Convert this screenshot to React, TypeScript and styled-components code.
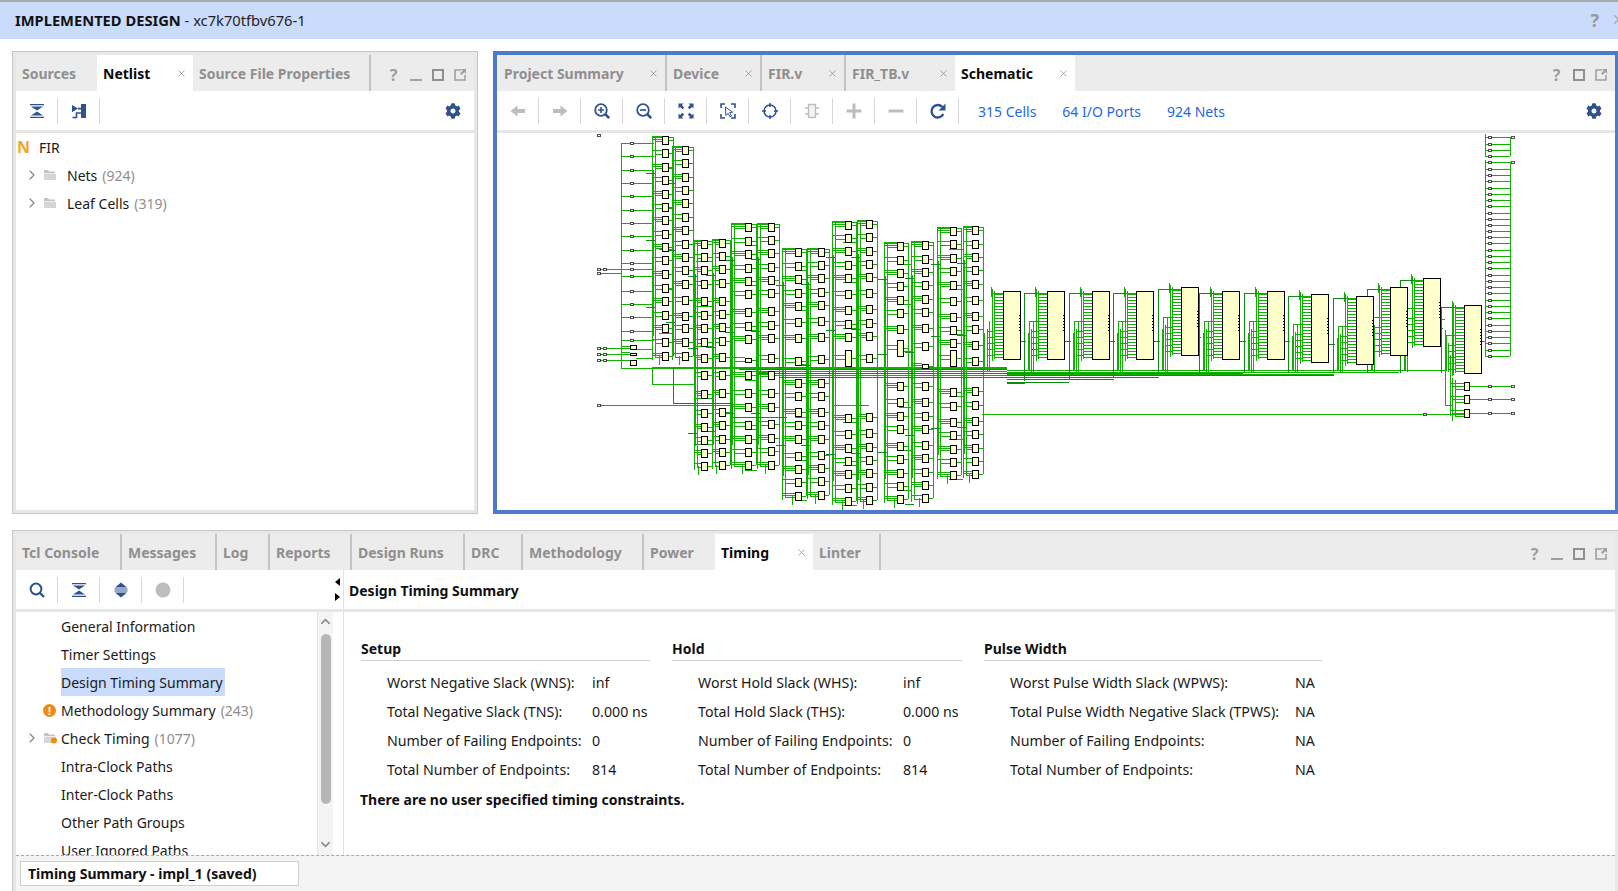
import styled, { createGlobalStyle } from 'styled-components'
import { ReactNode } from 'react'
import { FaCog } from 'react-icons/fa'
import { ChevronRight, ChevronUp, ChevronDown, X } from 'lucide-react'

const NAVY = '#2f5190'
const OFF = '#bdbdbd'

const GlobalStyle = createGlobalStyle`
  html, body {
    margin: 0;
    padding: 0;
    width: 1618px;
    height: 891px;
    overflow: hidden;
    background: #fff;
    font-family: "Noto Sans", "Open Sans", sans-serif;
    font-size: 14px;
    color: #1a1a1a;
  }
  * { box-sizing: border-box; }
`

/* ---------- schematic data, page coordinates ---------- */

type Column = { x: number; bus: number; ys: number[]; tall?: number[]; flat?: number[] }

const COLUMNS: Column[] = [
  { x: 666, bus: 13, ys: [140, 153, 167, 180, 194, 207, 220, 234, 247, 260, 274, 288, 301, 315, 328, 342, 356] },
  { x: 686, bus: 13, ys: [150, 163, 177, 190, 203, 217, 230, 244, 257, 270, 284, 300, 316, 328, 342, 356] },
  { x: 705, bus: 10, ys: [244, 257, 270, 284, 301, 315, 328, 342, 358, 375, 394, 413, 427, 440, 453, 466] },
  { x: 723, bus: 10, ys: [243, 256, 269, 283, 301, 314, 327, 341, 357, 375, 393, 412, 425, 439, 452, 465] },
  { x: 749, bus: 17, ys: [227, 241, 254, 268, 281, 294, 312, 326, 339, 360, 375, 393, 407, 425, 439, 452, 465], flat: [360] },
  { x: 772, bus: 14, ys: [227, 240, 253, 267, 280, 293, 311, 325, 338, 358, 375, 393, 407, 424, 438, 451, 465] },
  { x: 799, bus: 16, ys: [252, 266, 279, 293, 306, 322, 338, 361, 383, 396, 412, 425, 439, 456, 469, 482, 496] },
  { x: 822, bus: 14, ys: [252, 265, 278, 292, 305, 321, 337, 359, 383, 396, 412, 425, 439, 455, 468, 481, 495] },
  { x: 849, bus: 16, ys: [225, 238, 251, 265, 278, 294, 310, 324, 337, 358, 418, 434, 448, 461, 474, 488, 501], tall: [358] },
  { x: 870, bus: 12, ys: [224, 237, 251, 264, 277, 293, 309, 323, 336, 358, 417, 433, 447, 460, 473, 487, 500] },
  { x: 901, bus: 16, ys: [246, 260, 273, 286, 300, 313, 329, 348, 386, 402, 416, 429, 446, 459, 473, 486, 499], tall: [348] },
  { x: 926, bus: 14, ys: [245, 259, 272, 285, 299, 312, 328, 346, 366, 386, 402, 416, 429, 445, 458, 472, 485, 498], flat: [366] },
  { x: 954, bus: 16, ys: [231, 244, 258, 271, 285, 301, 317, 330, 343, 358, 392, 406, 422, 435, 449, 462, 475], tall: [358] },
  { x: 976, bus: 12, ys: [230, 244, 257, 270, 284, 300, 316, 329, 345, 361, 391, 405, 421, 434, 448, 461, 474] },
]

const BLOCKS = [
  { x: 1004, y: 291 },
  { x: 1048, y: 291 },
  { x: 1093, y: 291 },
  { x: 1137, y: 291 },
  { x: 1182, y: 287 },
  { x: 1223, y: 291 },
  { x: 1268, y: 291 },
  { x: 1312, y: 294 },
  { x: 1357, y: 296 },
  { x: 1391, y: 287 },
  { x: 1424, y: 278 },
  { x: 1465, y: 305 },
]

const LEFT_PORT_Y = [143, 156, 170, 183, 196, 210, 223, 236, 250, 263, 269, 276, 291, 304, 317, 331, 340]
const RIGHT_PORT_Y = [137, 144, 150, 156, 162, 169, 175, 181, 188, 194, 200, 206, 213, 219, 225, 231, 237, 243, 250, 256, 262, 268, 275, 281, 287, 293, 300, 306, 312, 318, 325, 331, 337, 343, 350, 356]
const OUT_CELLS = [386, 399, 413]

function buildWires() {
  const bright: string[] = []
  const dark: string[] = []
  const h = (list: string[], x1: number, x2: number, y: number) => list.push(`M${x1} ${y}H${x2}`)
  const v = (list: string[], x: number, y1: number, y2: number) => list.push(`M${x} ${y1}V${y2}`)

  // inputs on the left
  v(bright, 622, 143, 368)
  LEFT_PORT_Y.forEach(y => h(bright, 622, 655, y))
  h(bright, 599, 622, 269)
  h(bright, 599, 622, 273)
  ;[348, 354, 360].forEach(y => h(bright, 599, 631, y))
  h(bright, 622, 631, 346)
  h(bright, 622, 631, 352)
  h(bright, 637, 653, 349)
  h(bright, 637, 653, 358)
  h(bright, 622, 653, 368)
  h(bright, 653, 1008, 368)
  v(bright, 653, 368, 384)
  h(bright, 653, 695, 384)
  v(dark, 674, 368, 403)
  h(dark, 674, 733, 403)
  v(dark, 733, 403, 417)
  h(dark, 733, 788, 417)
  h(bright, 599, 733, 405)
  h(bright, 835, 870, 405)
  h(bright, 983, 1465, 414)

  // columns of small cells
  COLUMNS.forEach((c, i) => {
    const top = c.ys[0]
    const bottom = c.ys[c.ys.length - 1]
    const left = c.x - c.bus
    v(bright, left, top - 4, bottom + 4)
    v(bright, left + 3, top - 2, bottom + 2)
    v(bright, left + 1, top + 30, bottom - 20)
    v(bright, c.x - 6, bottom, bottom + 9)
    v(bright, c.x + 8, top - 3, bottom)
    h(bright, left, c.x - 3, top - 4)
    h(bright, c.x, c.x + 8, top - 3)
    c.ys.forEach((y, n) => {
      h(bright, left, c.x - 3, y - 3)
      h(bright, left + 3, c.x - 3, y + 1)
      if (n % 2 === 0) h(bright, left, c.x - 3, y - 1)
      h(bright, c.x + 3, c.x + 8, y)
      if (n % 3 === 1 && i % 2 === 1) h(bright, c.x - 26, left, y + 5)
      if (n % 5 === 2) h(dark, left - 6, left + 3, y + 6)
    })
  })

  // the shared bus under the big blocks
  ;[367, 369, 371, 373, 375, 377].forEach((y, n) => h(n % 2 ? dark : bright, n === 0 ? 653 : 730 + n * 10, 1008, y))
  h(dark, 1008, 1244, 373)
  h(bright, 1008, 1446, 370)
  h(bright, 1008, 1400, 372)
  h(bright, 1008, 1335, 374)
  h(dark, 1008, 1335, 375)
  h(dark, 1008, 1160, 377)
  h(dark, 1008, 1115, 379)
  h(dark, 1008, 1070, 382)
  h(dark, 1008, 1026, 383)

  // big blocks
  BLOCKS.forEach((b, i) => {
    for (let y = b.y + 3; y < b.y + 68; y += 3) {
      h(bright, b.x - 9, b.x, y)
    }
    for (let y = b.y + 40; y < b.y + 68; y += 6) {
      h(bright, b.x - 16, b.x - 9, y)
    }
    v(bright, b.x - 9, b.y, b.y + 68)
    v(bright, b.x - 12, b.y - 4, b.y + 6)
    v(bright, b.x - 11, b.y - 2, b.y + 70)
    h(bright, b.x - 12, b.x, b.y + 2)
    v(bright, b.x - 16, b.y + 38, 372)
    v(bright, b.x - 19, b.y + 42, 370)
    if (i < 9) v(bright, b.x - 14, b.y + 30, 372)

    if (i > 0) {
      const prev = BLOCKS[i - 1]
      const lx = b.x - 23
      h(dark, lx, b.x - 9, b.y + 2)
      v(dark, lx, b.y + 2, i < 4 ? 383 - i * 2 : 373)
      h(dark, prev.x + 17, lx + 2, prev.y + 50)
      v(bright, lx + 5, b.y + 30, 371)
      h(bright, lx + 5, b.x - 9, b.y + 30)
    }
  })
  h(bright, 1441, 1446, 319)
  v(bright, 1446, 330, 405)
  v(bright, 1451, 355, 416)
  v(bright, 1453, 305, 376)
  h(bright, 1482, 1486, 341)

  // output comb, top right
  v(bright, 1486, 134, 157)
  v(bright, 1486, 160, 357)
  v(bright, 1511, 137, 156)
  v(bright, 1511, 162, 356)
  RIGHT_PORT_Y.forEach(y => h(bright, 1486, 1511, y))

  // three output cells
  OUT_CELLS.forEach(y => {
    h(bright, 1470, 1513, y)
    h(bright, 1451, 1465, y - 3)
    h(bright, 1453, 1465, y)
    h(bright, 1456, 1465, y + 3)
  })
  v(bright, 1453, 378, 421)
  v(bright, 1456, 380, 416)
  h(bright, 1446, 1453, 405)

  return { bright: bright.join(''), dark: dark.join('') }
}

const Schematic = () => {
  const { bright, dark } = buildWires()
  return (
    <SchematicSvg viewBox="498 133 1117 377" shapeRendering="crispEdges">
      <path d={bright} fill="none" stroke="#10b000" strokeWidth={1} />
      <path d={dark} fill="none" stroke="#0c8c12" strokeWidth={1} />
      {COLUMNS.map(c =>
        c.ys.map(y => {
          const tall = c.tall?.includes(y)
          const flat = c.flat?.includes(y)
          const height = tall ? 16 : flat ? 4 : 8
          return <rect key={`${c.x}-${y}`} x={c.x - 3} y={y - height / 2} width={6} height={height} fill="#ffffcc" stroke="#000" strokeWidth={1} />
        }),
      )}
      {BLOCKS.map(b => (
        <g key={b.x}>
          <rect x={b.x} y={b.y} width={17} height={68} fill="#ffffcc" stroke="#000" strokeWidth={1} />
          <path d={`M${b.x + 17} ${b.y + 24}v18`} stroke="#000" strokeWidth={2} strokeDasharray="1 2" fill="none" />
        </g>
      ))}
      {[
        [631, 345, 6, 4],
        [631, 353, 6, 2],
        [631, 360, 6, 5],
      ].map(([x, y, w, hh]) => (
        <rect key={y} x={x} y={y} width={w} height={hh} fill="#ffffcc" stroke="#000" strokeWidth={1} />
      ))}
      {OUT_CELLS.map(y => (
        <rect key={y} x={1465} y={y - 4} width={5} height={8} fill="#ffffcc" stroke="#000" strokeWidth={1} />
      ))}
      <Ports
        points={[
          ...LEFT_PORT_Y.map(y => [632, y]),
          [599, 135],
          [599, 269],
          [599, 273],
          [605, 269],
          [599, 348],
          [605, 348],
          [599, 354],
          [605, 354],
          [599, 360],
          [605, 360],
          [599, 405],
          [1425, 414],
          ...RIGHT_PORT_Y.map(y => [1490, y]),
          [1513, 137],
          [1513, 162],
          ...OUT_CELLS.flatMap(y => [
            [1490, y],
            [1513, y],
          ]),
        ]}
      />
    </SchematicSvg>
  )
}

const Ports = ({ points }: { points: number[][] }) => (
  <>
    {points.map(([x, y]) => (
      <rect key={`${x}:${y}`} x={x - 1} y={y - 1} width={3} height={2} fill="#fff" stroke="#222" strokeWidth={0.8} />
    ))}
  </>
)

/* ---------- icons ---------- */

const Ico = ({ children, size = 18 }: { children: ReactNode; size?: number }) => (
  <svg width={size} height={size} viewBox="0 0 18 18">
    {children}
  </svg>
)

const CollapseAll = () => (
  <Ico>
    <path d="M2 2h14v1.2H2zM2 14.8h14V16H2z" fill={NAVY} />
    <path d="M3 4.5h12L9 8.6zM3 13.5h12L9 9.4z" fill={NAVY} />
  </Ico>
)
const ExpandAll = () => (
  <Ico>
    <path d="M9 1.5l6 5H3zM9 16.5l-6-5h12z" fill={NAVY} />
    <path d="M2.5 7.4h13v1.2h-13zM2.5 9.4h13v1.2h-13z" fill={NAVY} />
  </Ico>
)
const AutoConnect = () => (
  <Ico>
    <path d="M11 2h5v14h-5zM2 3l6 3.6L2 10.2z" fill={NAVY} />
    <path d="M11 11H6.5v4.5H2.5M8 6.6h3" stroke={NAVY} strokeWidth={1.6} fill="none" />
  </Ico>
)
const Search = () => (
  <Ico>
    <circle cx="8" cy="8" r="5.4" fill="none" stroke={NAVY} strokeWidth={2} />
    <path d="M12 12l4 4" stroke={NAVY} strokeWidth={2.4} />
  </Ico>
)
const DisabledDot = () => (
  <Ico>
    <circle cx="9" cy="9" r="7.5" fill={OFF} />
  </Ico>
)
const ArrowLeft = () => (
  <Ico>
    <path d="M1.5 9l7-5.5V7H16v4H8.5v3.5z" fill={OFF} />
  </Ico>
)
const ArrowRight = () => (
  <Ico>
    <path d="M16.5 9l-7-5.5V7H2v4h7.5v3.5z" fill={OFF} />
  </Ico>
)
const ZoomGlass = ({ plus }: { plus?: boolean }) => (
  <Ico>
    <circle cx="8" cy="8" r="5.8" fill="none" stroke={NAVY} strokeWidth={1.8} />
    <path d={plus ? 'M5 8h6M8 5v6' : 'M5 8h6'} stroke={NAVY} strokeWidth={1.6} />
    <path d="M12.2 12.2l4 4" stroke={NAVY} strokeWidth={2.6} />
  </Ico>
)
const FitView = () => (
  <Ico>
    <path d="M1.5 1.5h5l-1.6 1.6 2.3 2.3-1.8 1.8-2.3-2.3-1.6 1.6zM16.5 1.5v5l-1.6-1.6-2.3 2.3-1.8-1.8 2.3-2.3-1.6-1.6zM1.5 16.5v-5l1.6 1.6 2.3-2.3 1.8 1.8-2.3 2.3 1.6 1.6zM16.5 16.5h-5l1.6-1.6-2.3-2.3 1.8-1.8 2.3 2.3 1.6-1.6z" fill={NAVY} />
  </Ico>
)
const SelectRegion = () => (
  <Ico>
    <path d="M2 6V2h4M12 2h4v4M16 12v4h-4M6 16H2v-4" fill="none" stroke={NAVY} strokeWidth={1.6} />
    <path d="M6.5 5l7 5.2-3 .4 2 3.4-1.5.8-2-3.4-2.2 2z" fill="#fff" stroke={NAVY} strokeWidth={1} />
  </Ico>
)
const Target = () => (
  <Ico>
    <circle cx="9" cy="9" r="6" fill="none" stroke={NAVY} strokeWidth={1.5} />
    <path d="M9 1v4M9 13v4M1 9h4M13 9h4" stroke={NAVY} strokeWidth={1.5} />
  </Ico>
)
const ChipOff = () => (
  <Ico>
    <rect x="5.5" y="2.5" width="7" height="13" fill="#f3f3f3" stroke={OFF} strokeWidth={1.4} />
    <path d="M2 6h3.5M2 12h3.5M12.5 6H16M12.5 12H16" stroke={OFF} strokeWidth={1.4} />
  </Ico>
)
const PlusOff = () => (
  <Ico>
    <path d="M1.5 7.5h15v3h-15zM7.5 1.5h3v15h-3z" fill={OFF} />
  </Ico>
)
const MinusOff = () => (
  <Ico>
    <path d="M1.5 7.5h15v3h-15z" fill={OFF} />
  </Ico>
)
const Refresh = () => (
  <Ico>
    <path d="M14.3 12a6.2 6.2 0 1 1-1-7" fill="none" stroke={NAVY} strokeWidth={2.4} />
    <path d="M16.5 1.5v7h-7z" fill={NAVY} />
  </Ico>
)
const Folder = ({ dot }: { dot?: boolean }) => (
  <svg width={14} height={12} viewBox="0 0 14 12">
    <path d="M1 1h4l1 1.5h6V4H1z" fill="#c4c4c4" />
    <path d="M1 4.6h12V11H1z" fill="#d6d6d6" />
    {dot && <circle cx="11" cy="8.5" r="3" fill="#f08a12" />}
  </svg>
)
const MinimizeBar = () => (
  <svg width={12} height={12} viewBox="0 0 12 12">
    <path d="M0 10h12v2H0z" fill="#a0a0a0" />
  </svg>
)
const MaximizeBox = () => (
  <svg width={12} height={12} viewBox="0 0 12 12">
    <rect x="1" y="1" width="10" height="10" fill="none" stroke="#909090" strokeWidth={2} />
  </svg>
)
const PopOut = () => (
  <svg width={12} height={12} viewBox="0 0 12 12">
    <path d="M7 1H1v10h10V6" fill="none" stroke="#a0a0a0" strokeWidth={1.6} />
    <path d="M7 0h5v5L10.3 3.3 7.5 6 6 4.5 8.7 1.7z" fill="#a0a0a0" />
  </svg>
)

/* ---------- shared bits ---------- */

type TabSpec = { label: string; w: number; active?: boolean; close?: boolean; sep?: boolean }

const TabStrip = ({ tabs, lead = 0, children }: { tabs: TabSpec[]; lead?: number; children?: ReactNode }) => (
  <TabBar $lead={lead}>
    {tabs.map(t => (
      <Tab key={t.label} $w={t.w} $active={t.active} $sep={t.sep}>
        <TabLabel $active={t.active}>{t.label}</TabLabel>
        {t.close && (
          <CloseMark>
            <X size={11} strokeWidth={1.6} />
          </CloseMark>
        )}
      </Tab>
    ))}
    <WindowControls>{children}</WindowControls>
  </TabBar>
)

const Controls = ({ minimize = true }: { minimize?: boolean }) => (
  <>
    <ControlCell>
      <Help>?</Help>
    </ControlCell>
    {minimize && (
      <ControlCell>
        <MinimizeBar />
      </ControlCell>
    )}
    <ControlCell>
      <MaximizeBox />
    </ControlCell>
    <ControlCell>
      <PopOut />
    </ControlCell>
  </>
)

const TIMING_COLUMNS = [
  {
    title: 'Setup',
    w: 289,
    valueAt: 205,
    rows: [
      ['Worst Negative Slack (WNS):', 'inf'],
      ['Total Negative Slack (TNS):', '0.000 ns'],
      ['Number of Failing Endpoints:', '0'],
      ['Total Number of Endpoints:', '814'],
    ],
  },
  {
    title: 'Hold',
    w: 290,
    valueAt: 205,
    rows: [
      ['Worst Hold Slack (WHS):', 'inf'],
      ['Total Hold Slack (THS):', '0.000 ns'],
      ['Number of Failing Endpoints:', '0'],
      ['Total Number of Endpoints:', '814'],
    ],
  },
  {
    title: 'Pulse Width',
    w: 338,
    valueAt: 285,
    rows: [
      ['Worst Pulse Width Slack (WPWS):', 'NA'],
      ['Total Pulse Width Negative Slack (TPWS):', 'NA'],
      ['Number of Failing Endpoints:', 'NA'],
      ['Total Number of Endpoints:', 'NA'],
    ],
  },
]

export default function App() {
  return (
    <Page>
      <GlobalStyle />
      <HeaderBar>
        <strong>IMPLEMENTED DESIGN</strong>
        <HeaderPart> - xc7k70tfbv676-1</HeaderPart>
        <HeaderEnd>
          <HeaderHelp>?</HeaderHelp>
          <X size={15} color="#a8a8a8" strokeWidth={2.2} />
        </HeaderEnd>
      </HeaderBar>

      <TopRow>
        <GrayPanel $w={466}>
          <TabStrip
            tabs={[
              { label: 'Sources', w: 81 },
              { label: 'Netlist', w: 96, active: true, close: true },
              { label: 'Source File Properties', w: 178, sep: true },
            ]}>
            <Controls />
          </TabStrip>
          <Toolbar>
            <ToolCell>
              <CollapseAll />
            </ToolCell>
            <ToolCell>
              <AutoConnect />
            </ToolCell>
            <GearWrap>
              <FaCog size={16} color={NAVY} />
            </GearWrap>
          </Toolbar>
          <PaneRule />
          <TreeBody>
            <TreeRow>
              <NetlistMark>N</NetlistMark>
              FIR
            </TreeRow>
            <TreeRow $pad={8}>
              <ChevronRight size={16} color="#808080" strokeWidth={1.6} />
              <FolderGap>
                <Folder />
              </FolderGap>
              Nets<Count>(924)</Count>
            </TreeRow>
            <TreeRow $pad={8}>
              <ChevronRight size={16} color="#808080" strokeWidth={1.6} />
              <FolderGap>
                <Folder />
              </FolderGap>
              Leaf Cells<Count>(319)</Count>
            </TreeRow>
          </TreeBody>
        </GrayPanel>

        <BluePanel>
          <TabStrip
            lead={1}
            tabs={[
              { label: 'Project Summary', w: 169, close: true, sep: true },
              { label: 'Device', w: 95, close: true, sep: true },
              { label: 'FIR.v', w: 84, close: true, sep: true },
              { label: 'FIR_TB.v', w: 109, close: true },
              { label: 'Schematic', w: 120, active: true, close: true },
            ]}>
            <Controls minimize={false} />
          </TabStrip>
          <Toolbar>
            <ToolCell>
              <ArrowLeft />
            </ToolCell>
            <ToolCell>
              <ArrowRight />
            </ToolCell>
            <ToolCell>
              <ZoomGlass plus />
            </ToolCell>
            <ToolCell>
              <ZoomGlass />
            </ToolCell>
            <ToolCell>
              <FitView />
            </ToolCell>
            <ToolCell>
              <SelectRegion />
            </ToolCell>
            <ToolCell>
              <Target />
            </ToolCell>
            <ToolCell>
              <ChipOff />
            </ToolCell>
            <ToolCell>
              <PlusOff />
            </ToolCell>
            <ToolCell>
              <MinusOff />
            </ToolCell>
            <ToolCell>
              <Refresh />
            </ToolCell>
            <StatLinks>
              <StatLink>315 Cells</StatLink>
              <StatLink>64 I/O Ports</StatLink>
              <StatLink>924 Nets</StatLink>
            </StatLinks>
            <GearWrap>
              <FaCog size={16} color={NAVY} />
            </GearWrap>
          </Toolbar>
          <PaneRule />
          <Schematic />
        </BluePanel>
      </TopRow>

      <BottomPanel>
        <TabStrip
          tabs={[
            { label: 'Tcl Console', w: 106, sep: true },
            { label: 'Messages', w: 95, sep: true },
            { label: 'Log', w: 53, sep: true },
            { label: 'Reports', w: 82, sep: true },
            { label: 'Design Runs', w: 113, sep: true },
            { label: 'DRC', w: 58, sep: true },
            { label: 'Methodology', w: 121, sep: true },
            { label: 'Power', w: 71 },
            { label: 'Timing', w: 98, active: true, close: true },
            { label: 'Linter', w: 68, sep: true },
          ]}>
          <Controls />
        </TabStrip>
        <SplitArea>
          <SidePane>
            <Toolbar>
              <ToolCell>
                <Search />
              </ToolCell>
              <ToolCell>
                <CollapseAll />
              </ToolCell>
              <ToolCell>
                <ExpandAll />
              </ToolCell>
              <ToolCell>
                <DisabledDot />
              </ToolCell>
              <SashMarks>
                <SashLeft />
                <SashRight />
              </SashMarks>
            </Toolbar>
            <PaneRule />
            <SideBody>
              <SideTree>
                <NavRow>General Information</NavRow>
                <NavRow>Timer Settings</NavRow>
                <NavRow>
                  <Selected>Design Timing Summary</Selected>
                </NavRow>
                <NavRow>
                  <WarnDot>!</WarnDot>
                  Methodology Summary<Count>(243)</Count>
                </NavRow>
                <NavRow>
                  <RowLead>
                    <ChevronRight size={16} color="#808080" strokeWidth={1.6} />
                    <Folder dot />
                  </RowLead>
                  Check Timing<Count>(1077)</Count>
                </NavRow>
                <NavRow>Intra-Clock Paths</NavRow>
                <NavRow>Inter-Clock Paths</NavRow>
                <NavRow>Other Path Groups</NavRow>
                <NavRow>User Ignored Paths</NavRow>
              </SideTree>
              <ScrollTrack>
                <ChevronUp size={15} color="#8a8a8a" strokeWidth={2.4} />
                <ScrollThumb />
                <ChevronDown size={15} color="#8a8a8a" strokeWidth={2.4} />
              </ScrollTrack>
            </SideBody>
          </SidePane>
          <MainPane>
            <MainTitleBar>Design Timing Summary</MainTitleBar>
            <PaneRule />
            <SummaryBody>
              <SummaryColumns>
                {TIMING_COLUMNS.map(col => (
                  <SummaryColumn key={col.title} $w={col.w}>
                    <SummaryHeading>{col.title}</SummaryHeading>
                    <SummaryRows>
                      {col.rows.map(([label, value]) => (
                        <SummaryRow key={label}>
                          <SummaryLabel $w={col.valueAt}>{label}</SummaryLabel>
                          <span>{value}</span>
                        </SummaryRow>
                      ))}
                    </SummaryRows>
                  </SummaryColumn>
                ))}
              </SummaryColumns>
              <SummaryNote>There are no user specified timing constraints.</SummaryNote>
            </SummaryBody>
          </MainPane>
        </SplitArea>
        <StatusStrip>
          <StatusTab>Timing Summary - impl_1 (saved)</StatusTab>
        </StatusStrip>
      </BottomPanel>
    </Page>
  )
}

/* ---------- styles ---------- */

const Page = styled.div`
  display: flex;
  flex-direction: column;
  width: 1618px;
  height: 891px;
  overflow: hidden;
`

const HeaderBar = styled.header`
  display: flex;
  align-items: center;
  flex: none;
  height: 39px;
  padding: 0 0 2px 15px;
  background: #cadcfc;
  border-top: 2px solid #a9a9a9;
  font-size: 14.7px;
  color: #111;
  white-space: pre;
`

const HeaderPart = styled.span`
  color: #222;
`

const HeaderEnd = styled.div`
  display: flex;
  align-items: center;
  gap: 12px;
  margin-left: auto;
  margin-right: -8px;
`

const HeaderHelp = styled.span`
  font-size: 18px;
  font-weight: 700;
  color: #999;
`

const TopRow = styled.div`
  display: flex;
  flex: none;
  gap: 15px;
  height: 463px;
  margin-top: 12px;
  padding-left: 12px;
`

const GrayPanel = styled.section<{ $w: number }>`
  display: flex;
  flex-direction: column;
  flex: none;
  width: ${p => p.$w}px;
  padding: 3px;
  background: #e8e8e8;
  border: 1px solid #c8c8c8;
  overflow: hidden;
`

const BluePanel = styled.section`
  display: flex;
  flex-direction: column;
  flex: 1;
  min-width: 0;
  border: 4px solid #4a7cca;
  border-right-width: 3px;
  background: #fff;
  overflow: hidden;
`

const BottomPanel = styled.section`
  display: flex;
  flex-direction: column;
  flex: none;
  height: 361px;
  margin: 16px 0 0 12px;
  padding: 3px 3px 0;
  background: #e8e8e8;
  border: 1px solid #c8c8c8;
  border-right: 0;
  border-bottom: 0;
  overflow: hidden;
`

const TabBar = styled.div<{ $lead: number }>`
  display: flex;
  flex: none;
  height: 36px;
  padding-left: ${p => p.$lead}px;
  background: #ececec;
`

const Tab = styled.div<{ $w: number; $active?: boolean; $sep?: boolean }>`
  display: flex;
  align-items: center;
  flex: none;
  width: ${p => p.$w}px;
  padding: 0 6px;
  background: ${p => (p.$active ? '#fff' : 'transparent')};
  border-right: ${p => (p.$sep ? '2px solid #c4c4c4' : '0')};
`

const TabLabel = styled.span<{ $active?: boolean }>`
  font-size: 14px;
  font-weight: 700;
  white-space: nowrap;
  color: ${p => (p.$active ? '#0a0a0a' : '#8f8f8f')};
`

const CloseMark = styled.span`
  display: flex;
  margin-left: auto;
  color: #8c8c8c;
`

const WindowControls = styled.div`
  display: flex;
  align-items: center;
  margin-left: auto;
  padding: 3px 3px 0 0;
`

const ControlCell = styled.div`
  display: flex;
  align-items: center;
  justify-content: center;
  width: 22px;
`

const Help = styled.span`
  margin-right: 1px;
  font-size: 16px;
  font-weight: 700;
  color: #9c9c9c;
`

const Toolbar = styled.div`
  display: flex;
  align-items: center;
  flex: none;
  height: 39px;
  background: #fff;
`

const ToolCell = styled.div`
  display: flex;
  align-items: center;
  justify-content: center;
  flex: none;
  width: 42px;
  height: 26px;
  border-right: 1px solid #d8d8d8;
`

const GearWrap = styled.div`
  display: flex;
  margin-left: auto;
  padding-right: 13px;
`

const StatLinks = styled.div`
  display: flex;
  gap: 26px;
  margin: 1px 0 0 19px;
`

const StatLink = styled.span`
  font-size: 14px;
  color: #2567e4;
`

const PaneRule = styled.div`
  flex: none;
  height: 3px;
  background: #e6e6e6;
`

const TreeBody = styled.div`
  flex: 1;
  background: #fff;
`

const TreeRow = styled.div<{ $pad?: number }>`
  display: flex;
  align-items: center;
  height: 28px;
  padding-left: ${p => p.$pad ?? 0}px;
`

const NetlistMark = styled.span`
  width: 23px;
  padding-left: 1px;
  font-size: 16px;
  font-weight: 700;
  color: #f5a623;
`

const FolderGap = styled.span`
  display: flex;
  margin: 0 10px 0 3px;
`

const Count = styled.span`
  margin-left: 5px;
  color: #8e8e8e;
`

const SchematicSvg = styled.svg`
  display: block;
  flex: none;
  width: 1117px;
  height: 377px;
  background: #fff;
`

const SplitArea = styled.div`
  display: flex;
  flex: 1;
  min-height: 0;
  background: #fff;
`

const SidePane = styled.div`
  display: flex;
  flex-direction: column;
  flex: none;
  width: 328px;
  border-right: 1px solid #e2e2e2;
`

const SashMarks = styled.div`
  display: flex;
  flex-direction: column;
  align-items: flex-end;
  gap: 7px;
  margin: 0 3px 0 auto;
`

const SashLeft = styled.span`
  border-style: solid;
  border-width: 4px 5px 4px 0;
  border-color: transparent #000 transparent transparent;
`

const SashRight = styled.span`
  border-style: solid;
  border-width: 4px 0 4px 5px;
  border-color: transparent transparent transparent #000;
`

const SideBody = styled.div`
  display: flex;
  flex: 1;
  min-height: 0;
`

const SideTree = styled.div`
  flex: none;
  width: 301px;
  overflow: hidden;
`

const NavRow = styled.div`
  position: relative;
  display: flex;
  align-items: center;
  height: 28px;
  padding-left: 45px;
  white-space: nowrap;
`

const Selected = styled.span`
  display: block;
  height: 28px;
  line-height: 29px;
  padding-right: 2px;
  background: #cadcfc;
`

const WarnDot = styled.span`
  position: absolute;
  left: 27px;
  top: 8px;
  width: 13px;
  height: 13px;
  border-radius: 50%;
  background: #f08a12;
  color: #fff;
  font-size: 11px;
  font-weight: 700;
  line-height: 13px;
  text-align: center;
`

const RowLead = styled.span`
  position: absolute;
  left: 8px;
  top: 6px;
  display: flex;
  align-items: center;
  gap: 3px;
`

const ScrollTrack = styled.div`
  display: flex;
  flex-direction: column;
  align-items: center;
  flex: none;
  width: 16px;
  height: 243px;
  padding-top: 2px;
  background: #f4f4f4;
  border-left: 1px solid #e6e6e6;
`

const ScrollThumb = styled.div`
  width: 10px;
  height: 170px;
  margin: 5px 0 33px;
  border-radius: 5px;
  background: #b6b6b6;
`

const MainPane = styled.div`
  display: flex;
  flex-direction: column;
  flex: 1;
  min-width: 0;
`

const MainTitleBar = styled.div`
  display: flex;
  align-items: center;
  flex: none;
  height: 39px;
  padding: 2px 0 0 5px;
  font-weight: 700;
  color: #111;
`

const SummaryBody = styled.div`
  flex: 1;
  padding: 24px 0 0 17px;
`

const SummaryColumns = styled.div`
  display: flex;
  gap: 22px;
`

const SummaryColumn = styled.div<{ $w: number }>`
  flex: none;
  width: ${p => p.$w}px;
`

const SummaryHeading = styled.div`
  height: 25px;
  line-height: 26px;
  font-weight: 700;
  color: #111;
  border-bottom: 1px solid #cfcfcf;
`

const SummaryRows = styled.div`
  display: flex;
  flex-direction: column;
  margin-top: 7px;
`

const SummaryRow = styled.div`
  display: flex;
  align-items: center;
  height: 29px;
  padding-left: 26px;
  font-size: 14.2px;
  white-space: nowrap;
`

const SummaryLabel = styled.span<{ $w: number }>`
  flex: none;
  width: ${p => p.$w}px;
`

const SummaryNote = styled.div`
  margin: 6px 0 0 -1px;
  line-height: 20px;
  font-weight: 700;
  color: #111;
`

const StatusStrip = styled.div`
  flex: none;
  height: 36px;
  padding: 5px 0 0 4px;
  background: #f4f4f4;
  border-top: 1px dashed #a8a8a8;
`

const StatusTab = styled.div`
  display: flex;
  align-items: center;
  width: 279px;
  height: 25px;
  padding-left: 7px;
  background: #fff;
  border: 1px solid #cfcfcf;
  font-weight: 700;
  color: #111;
`
